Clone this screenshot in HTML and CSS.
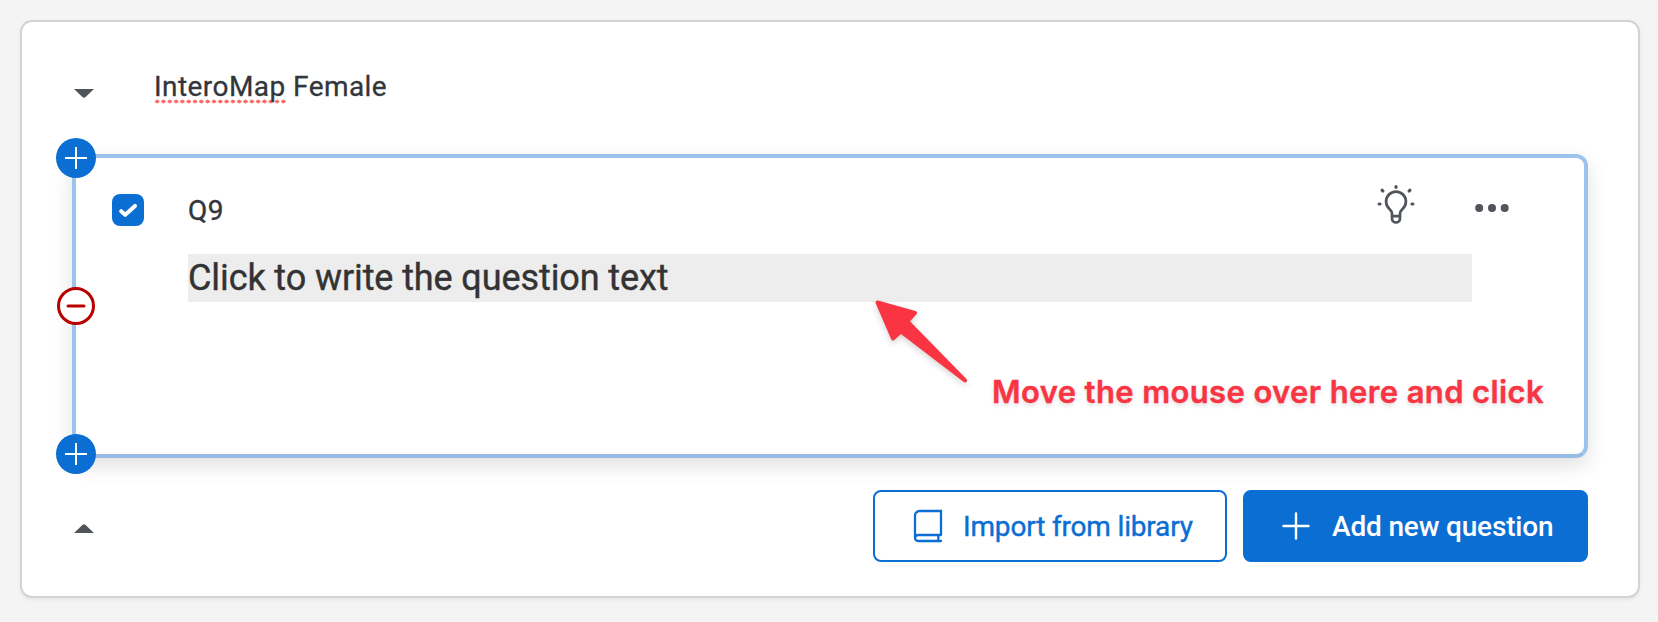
FILE: index.html
```html
<!DOCTYPE html>
<html lang="en">
<head>
<meta charset="utf-8">
<title>Survey builder</title>
<link rel="stylesheet" href="styles.css">
</head>
<body>
<section class="block">
  <header class="block-header">
    <svg class="caret" viewBox="0 0 20 9"><path d="M0 0h20l-8.400 8a2.300 2.300 0 0 1-3.200 0z"/></svg>
    <h1 class="block-title"><span class="misspelled">InteroMap</span> Female</h1>
  </header>

  <article class="question">
    <button class="node node-top" aria-label="Add above"><svg viewBox="0 0 40 40"><path d="M9 20h22M20 9v22"/></svg></button>
    <button class="node node-remove" aria-label="Remove"><svg viewBox="0 0 38 38"><path d="M11 19h16"/></svg></button>
    <button class="node node-bottom" aria-label="Add below"><svg viewBox="0 0 40 40"><path d="M9 20h22M20 9v22"/></svg></button>

    <div class="question-bar">
      <span class="checkbox"><svg viewBox="0 0 32 32"><path d="M9.200 17.200l4 3.600 9.800-8.900"/></svg></span>
      <span class="question-id">Q9</span>
      <svg class="bulb" viewBox="0 0 40 42">
        <path d="M16 32v-2.500c0-1.900-.9-2.900-2.300-4.300a9.900 9.900 0 1 1 12.600 0c-1.400 1.400-2.300 2.400-2.300 4.300v5a4 4 0 0 1-8 0zM16 32.200h8"/>
        <path class="rays" d="M20 2.500v.8M6.100 6.300l.8.700M33.900 6.300l-.8.700M3.100 20h.9M36.900 20h-.9"/>
      </svg>
      <svg class="dots" viewBox="0 0 34 8"><circle cx="4.200" cy="4" r="4"/><circle cx="17" cy="4" r="4"/><circle cx="29.700" cy="4" r="4"/></svg>
    </div>
    <div class="question-text"><span>Click to write the question text</span></div>

    <svg class="arrow" viewBox="0 0 100 90"><path d="M7.500 6.500L45 17 37.300 25.500 95 84.500 30.800 35.500 23 42.500z"/></svg>
    <p class="hint">Move the mouse over here and click</p>
  </article>

  <footer class="block-footer">
    <svg class="caret" viewBox="0 0 20 9"><path d="M0 9h20l-8.400-8a2.300 2.300 0 0 0-3.200 0z"/></svg>
    <div class="actions">
      <button class="button outline">
        <svg class="book" viewBox="0 0 30 34"><path d="M28 26V2H6.500A4.500 4.500 0 0 0 2 6.500V29a3.200 3.200 0 0 0 3.200 3H28M28 26H5.200A3.200 3.200 0 0 0 2 29M25.300 26v6"/></svg>
        <span class="import-label">Import from library</span>
      </button>
      <button class="button primary">
        <svg class="plus" viewBox="0 0 28 28"><path d="M1.500 14h25M14 1.500v25"/></svg>
        <span class="add-label">Add new question</span>
      </button>
    </div>
  </footer>
</section>
</body>
</html>
```
FILE: styles.css
```css
* { box-sizing: border-box; }
body {
  margin: 0;
  padding: 20px 18px 24px 20px;
  height: 622px;
  background: #f4f4f4;
  color: #32363a;
  font-family: Roboto, sans-serif;
  overflow: hidden;
}
svg { display: block; flex: none; }
button { font: inherit; padding: 0; margin: 0; }
.block {
  height: 578px;
  padding: 0 50px;
  background: #fff;
  border: 2px solid #d3d3d3;
  border-radius: 12px;
  box-shadow: 0 2px 4px rgba(0, 0, 0, .06);
}
.block-header {
  display: flex;
  height: 132px;
  padding: 44px 0 0 2px;
}
.caret { width: 20px; height: 9px; fill: #50555b; }
.block-header .caret { margin-top: 23px; }
.block-title {
  margin: 1px 0 0 60px;
  font-size: 28px;
  line-height: 40px;
  font-weight: 400;
  letter-spacing: .44px;
  -webkit-text-stroke: .3px currentColor;
  white-space: nowrap;
}
.misspelled {
  display: inline-block;
  height: 37px;
  background: radial-gradient(circle at center, #ff6a66 1.800px, transparent 2.200px) 0 100% / 6.320px 5px repeat-x;
}
.question {
  position: relative;
  height: 304px;
  border: 4px solid #9bc3ec;
  border-bottom-color: #97bce3;
  border-radius: 12px;
  box-shadow: 0 8px 20px rgba(0, 0, 0, .12);
}
.node {
  position: absolute;
  width: 40px;
  height: 40px;
  left: -20px;
  border: 0;
  border-radius: 50%;
  background: #0b6ed3;
}
.node svg { width: 100%; height: 100%; fill: none; stroke: #fff; stroke-width: 2; }
.node-top { top: -20px; }
.node-bottom { bottom: -20px; }
.node-remove {
  top: 129px;
  left: -19px;
  width: 38px;
  height: 38px;
  border: 3px solid #b80000;
  background: #fff;
}
.node-remove svg { width: 38px; height: 38px; margin: -3px; stroke: #b80000; stroke-width: 3; stroke-linecap: round; }
.question-bar { display: flex; height: 96px; padding: 26px 0 0 36px; }
.checkbox { width: 32px; height: 32px; margin-top: 10px; border-radius: 8px; background: #0b6ed3; }
.checkbox svg { width: 32px; height: 32px; fill: none; stroke: #fff; stroke-width: 4; stroke-linecap: round; stroke-linejoin: round; }
.question-id {
  width: 1187px;
  margin-left: 44px;
  margin-top: 7px;
  font-size: 28px;
  line-height: 40px;
  letter-spacing: .6px;
  -webkit-text-stroke: .4px currentColor;
}
.bulb { width: 40px; height: 42px; margin-left: 1px; fill: none; stroke: #50555b; stroke-width: 2.700; }
.rays { stroke-width: 3.200; stroke-linecap: round; }
.dots { width: 34px; height: 8px; margin: 20px 0 0 59px; fill: #50555b; }
.question-text {
  width: 1284px;
  height: 48px;
  margin-left: 112px;
  background: #ededed;
  color: #333;
  font-size: 36px;
  line-height: 48px;
  letter-spacing: -.1px;
  -webkit-text-stroke: .4px currentColor;
  white-space: nowrap;
}
.arrow {
  position: absolute;
  left: 794px;
  top: 138px;
  width: 100px;
  height: 90px;
  fill: #fa3543;
  stroke: #fa3543;
  stroke-width: 4;
  stroke-linejoin: round;
  filter: drop-shadow(0 3px 3px rgba(0, 0, 0, .16));
}
.hint {
  position: absolute;
  left: 916px;
  top: 214px;
  margin: 0;
  color: #fa3543;
  font: 600 31px/40px Inter, sans-serif;
  letter-spacing: .38px;
  -webkit-text-stroke: .4px currentColor;
  text-shadow: 0 3px 4px rgba(0, 0, 0, .13);
  white-space: nowrap;
}
.block-footer { display: flex; justify-content: space-between; padding: 32px 0 0 2px; }
.block-footer .caret { margin-top: 34px; }
.actions { display: flex; gap: 16px; }
.button {
  display: flex;
  align-items: center;
  height: 72px;
  border: 2px solid #0b6ed3;
  border-radius: 8px;
  font-size: 28px;
  letter-spacing: -.17px;
  white-space: nowrap;
}
.outline { width: 354px; padding-left: 38px; background: #fff; color: #0b6ed3; }
.primary { width: 345px; padding-left: 37px; background: #0b6ed3; color: #fff; }
.book { width: 30px; height: 34px; fill: none; stroke: #0b6ed3; stroke-width: 2.300; stroke-linecap: round; }
.plus { width: 28px; height: 28px; fill: none; stroke: #fff; stroke-width: 2.400; stroke-linecap: round; }
.import-label { margin-left: 20px; -webkit-text-stroke: .4px currentColor; }
.add-label { margin-left: 22px; font-weight: 500; }
```
